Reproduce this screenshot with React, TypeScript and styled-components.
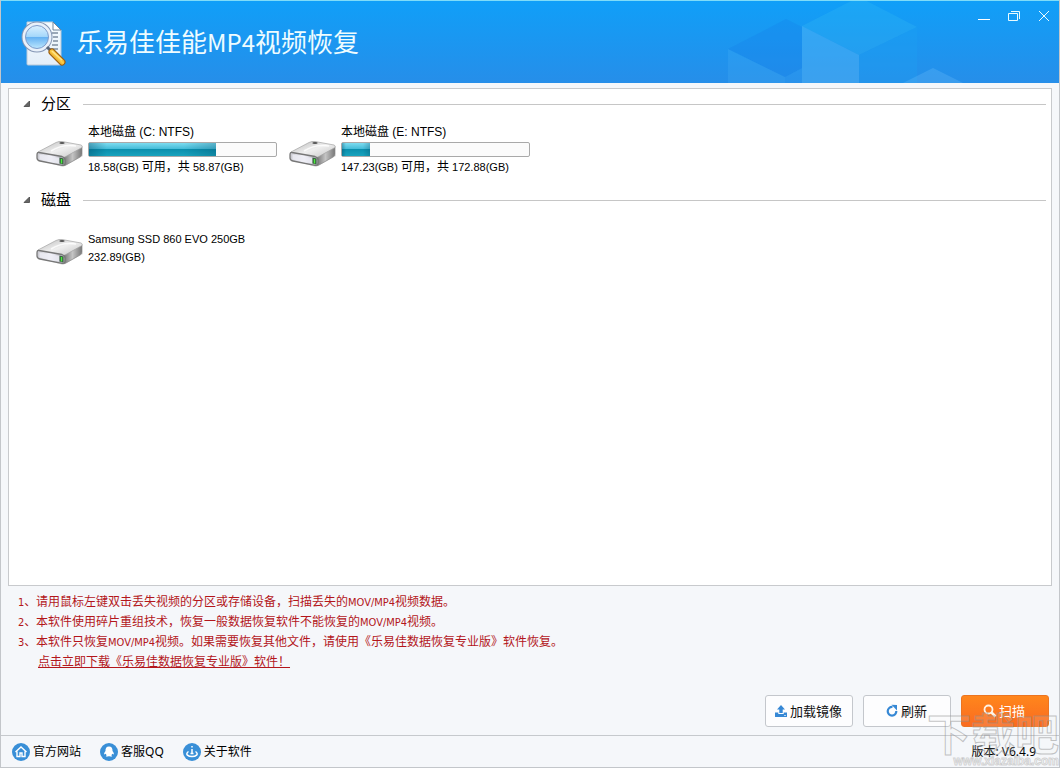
import React, { useState } from 'react';
import styled, { createGlobalStyle } from 'styled-components';

const cjk = '"Noto Sans CJK SC", sans-serif';

const GlobalStyle = createGlobalStyle`
  *, *::before, *::after { box-sizing: border-box; }
  body {
    margin: 0;
    background: #f5f7fa;
    color: #000;
    font: 12px/18px "Liberation Sans", ${cjk};
  }
  button { font: inherit; color: inherit; padding: 0; border: 0; background: none; cursor: pointer; }
`;

const Window = styled.div`
  position: relative;
  display: flex;
  flex-direction: column;
  min-height: 100vh;
  border: 1px solid #c3c6ca;
  border-top: 0;
  background: #f5f7fa;
  overflow: hidden;
`;

const Header = styled.header`
  position: relative;
  display: flex;
  align-items: center;
  justify-content: space-between;
  height: 83px;
  padding-left: 18px;
  border-top: 1px solid #7fdcf8;
  background: linear-gradient(#109ff8, #268ee9);
`;

const HeaderArt = styled.svg`
  position: absolute;
  right: 0;
  bottom: 0;
`;

const Brand = styled.div`
  display: flex;
  align-items: center;
  gap: 8px;
`;

const Title = styled.h1`
  margin: 0;
  padding-bottom: 2px;
  color: #eefcff;
  font: 400 26px/36px ${cjk};
`;

const TitleLatin = styled.span`
  font-size: 24px;
`;

const WindowControls = styled.div`
  position: relative;
  align-self: flex-start;
  display: flex;
  padding-top: 4px;
`;

const WindowButton = styled.button`
  display: flex;
  align-items: center;
  justify-content: center;
  width: 30px;
  height: 22px;
`;

const Panel = styled.main`
  flex: 1;
  margin: 5px 7px 0;
  padding: 5px 5px 0 12px;
  border: 1px solid #c8cacd;
  background: #fff;
`;

const Group = styled.section`
  height: 96px;
`;

const GroupHeader = styled.h2`
  display: flex;
  align-items: center;
  gap: 12px;
  margin: 0;
  height: 20px;
  font: 400 15px/20px ${cjk};
  &::after {
    content: '';
    flex: 1;
    height: 1px;
    background: #c6c6c6;
  }
`;

const GroupToggle = styled.button`
  display: flex;
  align-items: center;
  gap: 11px;
  padding: 0 0 2px 2px;
`;

const DriveGrid = styled.div<{ $offset: number }>`
  display: flex;
  flex-wrap: wrap;
  gap: 12px;
  padding: ${(p) => p.$offset}px 0 0 15px;
`;

const Drive = styled.article`
  display: flex;
  align-items: center;
  gap: 4px;
  width: 241px;
  min-height: 53px;
`;

const DriveImage = styled.svg`
  align-self: flex-start;
  margin-top: 15px;
`;

const DriveText = styled.div<{ $small?: boolean }>`
  flex: 1;
  font-size: ${(p) => (p.$small ? 11 : 12)}px;
  line-height: 18px;
`;

const Line = styled.div`
  white-space: nowrap;
`;

const Size = styled.span`
  font-size: 11px;
`;

const Meter = styled.div`
  height: 15px;
  margin: 1px 0;
  border: 1px solid #a9a9a9;
  border-radius: 2px;
  background: #fbfbfb;
`;

const MeterFill = styled.div`
  height: 100%;
  background: linear-gradient(90deg, rgba(0, 60, 90, 0.35), transparent 14%, transparent 75%, rgba(0, 60, 90, 0.25)),
    linear-gradient(#7ddcf0, #45bcd8 45%, #0b8fad 50%, #18a3bd);
`;

const Notes = styled.section`
  padding: 5px 17px 0;
  color: #b3161b;
  font: 12px/20px ${cjk};
`;

const NoteList = styled.ol`
  margin: 0;
  padding: 0;
  list-style: none;
`;

const NoteItem = styled.li`
  display: flex;
`;

const NoteNumber = styled.span`
  width: 18px;
  white-space: nowrap;
`;

const Format = styled.span`
  font: 11px/1px "DejaVu Sans Condensed", "DejaVu Sans", sans-serif;
`;

const DownloadLink = styled.a`
  display: block;
  width: fit-content;
  margin-left: 20px;
  color: inherit;
`;

const Actions = styled.div`
  display: flex;
  justify-content: flex-end;
  gap: 10px;
  padding: 24px 10px 8px;
`;

const ActionButton = styled.button<{ $primary?: boolean }>`
  display: flex;
  align-items: center;
  justify-content: center;
  gap: 2px;
  width: 88px;
  height: 32px;
  padding-right: 2px;
  border: 1px solid ${(p) => (p.$primary ? '#ec7420' : '#c4c7cc')};
  border-radius: 3px;
  background: ${(p) => (p.$primary ? 'linear-gradient(#ff861c, #fa6b20)' : '#fdfdfe')};
  color: ${(p) => (p.$primary ? '#fff' : '#111')};
  font: 13px/20px ${cjk};
`;

const Footer = styled.footer`
  display: flex;
  align-items: center;
  justify-content: space-between;
  height: 32px;
  padding: 0 23px 0 11px;
  border-top: 1px solid #c6c9cd;
  font: 12px/18px "Noto Sans", ${cjk};
`;

const FooterNav = styled.nav`
  display: flex;
  gap: 19px;
`;

const FooterLink = styled.a`
  display: flex;
  align-items: center;
  gap: 3px;
  color: #000;
  text-decoration: none;
`;

const Watermark = styled.div`
  position: absolute;
  right: 0;
  bottom: 0;
  display: flex;
  flex-direction: column;
  align-items: flex-end;
  pointer-events: none;
`;

const WatermarkName = styled.span`
  color: rgba(240, 240, 240, 0.15);
  -webkit-text-stroke: 1px rgba(140, 140, 140, 0.5);
  font: 700 44px/46px ${cjk};
`;

const WatermarkUrl = styled.span`
  color: rgba(255, 255, 255, 0.75);
  -webkit-text-stroke: 1px rgba(150, 150, 150, 0.4);
  font: 700 12px/12px "Liberation Sans", sans-serif;
`;

const Logo = () => (
  <svg width="50" height="50" viewBox="0 0 50 50" aria-hidden="true">
    <defs>
      <linearGradient id="paper" x2="0" y2="1">
        <stop stopColor="#f6fcff" /><stop offset="1" stopColor="#e4eef8" />
      </linearGradient>
      <linearGradient id="lens" x2="0" y2="1">
        <stop stopColor="#e3f4ff" /><stop offset=".48" stopColor="#a5d8fb" />
        <stop offset=".5" stopColor="#62b0f2" /><stop offset="1" stopColor="#c8eeff" />
      </linearGradient>
      <linearGradient id="handle" x1="0" y1="1" x2="1" y2="0">
        <stop stopColor="#b86b08" /><stop offset=".5" stopColor="#ffce45" /><stop offset="1" stopColor="#c27a13" />
      </linearGradient>
    </defs>
    <path d="M8 5h26l8 8v34q0 1-1 1H9q-1 0-1-1z" fill="url(#paper)" stroke="#b9c9d8" />
    <path d="M34 5v8h8z" fill="#fff" stroke="#71869b" />
    <path d="M33 16h6M34 20h5M34 24h5M33 28h6M31 32h8" stroke="#7d8da0" strokeWidth="1.4" />
    <circle cx="18" cy="20" r="13" fill="none" stroke="#8496b4" strokeWidth="5" />
    <circle cx="18" cy="20" r="13" fill="url(#lens)" stroke="#e9f1fa" strokeWidth="3" />
    <circle cx="18" cy="20" r="11.500" fill="none" stroke="#7f9ccb" />
    <path d="M28 30l3 3" stroke="#596779" strokeWidth="3" />
    <path d="M33 35l10 10" stroke="#9a5c0c" strokeWidth="7" strokeLinecap="round" />
    <path d="M33 35l10 10" stroke="url(#handle)" strokeWidth="5" strokeLinecap="round" />
    <path d="M33 34l10 9" stroke="#ffe58b" strokeWidth="1.5" />
  </svg>
);

const DriveIcon = () => (
  <DriveImage width="48" height="30" viewBox="0 0 48 30" aria-hidden="true">
    <defs>
      <linearGradient id="driveTop" x2="1" y2="1">
        <stop stopColor="#b8b8b8" /><stop offset=".5" stopColor="#efefef" /><stop offset="1" stopColor="#c4c4c4" />
      </linearGradient>
      <linearGradient id="driveSide" x2="1">
        <stop stopColor="#6f6f6f" /><stop offset=".5" stopColor="#c4c4c4" /><stop offset="1" stopColor="#777" />
      </linearGradient>
      <linearGradient id="driveFront" x2="1">
        <stop stopColor="#c9c9d0" /><stop offset=".5" stopColor="#f5f5fc" /><stop offset="1" stopColor="#a7a7b0" />
      </linearGradient>
    </defs>
    <path d="M3 22l24 7 20-11-2-4z" fill="#000" opacity=".14" />
    <path d="M27 19L46 9v7q0 2-2 3L30 27q-2 1-3 0z" fill="url(#driveSide)" stroke="#8a8a8a" strokeWidth=".7" />
    <path d="M2 14L20 4.500q3-1.500 6-1L45 7q2 .7 1 2.500L29 19q-2 1-5 .5L3 16q-2-.5-1-2z" fill="url(#driveTop)" stroke="#a3a3a3" strokeWidth=".7" />
    <path d="M15 13Q26 6 40 8" fill="none" stroke="#fff" strokeWidth="1.500" opacity=".8" />
    <ellipse cx="26" cy="5" rx="2.700" ry="1.100" fill="#555" />
    <path d="M3 14.500l23 4q3 1 3 3.500v3q0 3-3 2.300L4 23q-3-.6-3-3v-3q0-3 2-2.500z" fill="url(#driveFront)" stroke="#777" strokeWidth="1.300" />
    <path d="M3.500 16.500L23 20v5.500L3.500 21.500z" fill="#ececf4" opacity=".8" />
    <path d="M23.500 19.500l4 1v6l-4-1z" fill="#37603d" />
    <path d="M25.500 21v4.500" stroke="#48ed3d" strokeWidth="1.400" />
  </DriveImage>
);

const HeaderCubes = () => (
  <HeaderArt width="339" height="82" viewBox="720 1 339 82" aria-hidden="true">
    <path d="M728 49l58-30 16 8v41l-17 9z" fill="#167fe8" opacity=".28" />
    <path d="M728 49l57 28v6h-57z" fill="#5abdf7" opacity=".18" />
    <path d="M785 77l17-9v15h-17z" fill="#3ba3f4" opacity=".2" />
    <path d="M802 26l57-29 58 30-58 28z" fill="#38bcf2" opacity=".26" />
    <path d="M802 26l57 29v28h-57z" fill="#5dbcf8" opacity=".4" />
    <path d="M859 55l58-28v56h-58z" fill="#1fa1f3" opacity=".3" />
    <path d="M903 83l30-15 30 15z" fill="#6abef7" opacity=".3" />
  </HeaderArt>
);

const UploadIcon = () => (
  <svg width="14" height="14" viewBox="0 0 14 14" aria-hidden="true">
    <path d="M7 1l4 4.500H8.700v3.500H5.300V5.500H3z" fill="#3688d5" />
    <path d="M1 8.500h3.300V10h5.400V8.500H13v4q0 .5-.5.500h-11q-.5 0-.5-.5z" fill="#3688d5" />
    <path d="M10 11.500h2" stroke="#d5e8f8" strokeWidth=".8" />
  </svg>
);

const RefreshIcon = () => (
  <svg width="14" height="14" viewBox="0 0 14 14" aria-hidden="true">
    <path d="M7.500 3A4.300 4.300 0 1 0 11.300 7" fill="none" stroke="#3688d5" strokeWidth="2.200" />
    <path d="M6.500 .8L12 1v5.500z" fill="#3688d5" />
  </svg>
);

const SearchIcon = () => (
  <svg width="14" height="14" viewBox="0 0 14 14" fill="none" stroke="#fff3e5" aria-hidden="true">
    <circle cx="5.500" cy="5.500" r="4" strokeWidth="1.800" />
    <path d="M8.500 8.500l4 4" strokeWidth="2.500" />
  </svg>
);

const RoundIcon = ({ kind }: { kind: 'home' | 'qq' | 'about' }) => (
  <svg width="18" height="18" viewBox="0 0 18 18" aria-hidden="true">
    <circle cx="9" cy="9" r="9" fill="#398fd7" />
    {kind === 'home' && (
      <path d="M3.500 9L9 4l5.500 5M5 8.500v5h3V10h2v3.500h3v-5" fill="none" stroke="#fff" strokeWidth="1.400" />
    )}
    {kind === 'qq' && (
      <path d="M9 3.500c-2.700 0-3.700 2-3.500 4.500-1.500 2-1.500 3-1.200 3.500l1.400-.7.900 1.500-.9 1.200h2.500L9 13l.8.500h2.500l-.9-1.200.9-1.500 1.400.7c.3-.5.300-1.500-1.200-3.500.2-2.500-.8-4.500-3.500-4.500z" fill="#fff" />
    )}
    {kind === 'about' && (
      <g fill="none" stroke="#fff" strokeWidth="1.500">
        <path d="M9 3v1.500M9 6v5M7.500 10.500h3" />
        <path d="M5.500 8.500c-4 3 0 5 3.500 5s7.500-2 3.500-5" />
      </g>
    )}
  </svg>
);

function GroupBox({ title, offset, children }: { title: string; offset: number; children: React.ReactNode }) {
  const [open, setOpen] = useState(true);
  return (
    <Group>
      <GroupHeader>
        <GroupToggle type="button" aria-expanded={open} onClick={() => setOpen(!open)}>
          <svg width="7" height="7" viewBox="0 0 7 7" aria-hidden="true">
            <path d="M6.500 1v5.500H1z" fill="#666" stroke="#444" strokeWidth=".8" />
          </svg>
          {title}
        </GroupToggle>
      </GroupHeader>
      {open && <DriveGrid $offset={offset}>{children}</DriveGrid>}
    </Group>
  );
}

const partitions = [
  { name: '本地磁盘 (C: NTFS)', free: '18.58(GB)', total: '58.87(GB)', used: 68 },
  { name: '本地磁盘 (E: NTFS)', free: '147.23(GB)', total: '172.88(GB)', used: 15 },
];

export default function App() {
  return (
    <>
      <GlobalStyle />
      <Window>
        <Header>
          <HeaderCubes />
          <Brand>
            <Logo />
            <Title>乐易佳佳能<TitleLatin>MP4</TitleLatin>视频恢复</Title>
          </Brand>
          <WindowControls>
            <WindowButton type="button" aria-label="最小化">
              <svg width="12" height="12" viewBox="0 0 12 12"><path d="M0 9.500h12" stroke="#fff" /></svg>
            </WindowButton>
            <WindowButton type="button" aria-label="还原">
              <svg width="12" height="12" viewBox="0 0 12 12" fill="none" stroke="#e8fbff">
                <path d="M.5 3.500h9v7h-9zM3 1.500h8.500V9" />
              </svg>
            </WindowButton>
            <WindowButton type="button" aria-label="关闭">
              <svg width="12" height="12" viewBox="0 0 12 12" stroke="#e8fbff"><path d="M1 1l10 10M11 1L1 11" /></svg>
            </WindowButton>
          </WindowControls>
        </Header>

        <Panel>
          <GroupBox title="分区" offset={9}>
            {partitions.map((p) => (
              <Drive key={p.name}>
                <DriveIcon />
                <DriveText>
                  <Line>{p.name}</Line>
                  <Meter role="meter" aria-label={p.name} aria-valuemin={0} aria-valuemax={100} aria-valuenow={p.used}>
                    <MeterFill style={{ width: `${p.used}%` }} />
                  </Meter>
                  <Line>
                    <Size>{p.free} </Size>可用，共<Size> {p.total}</Size>
                  </Line>
                </DriveText>
              </Drive>
            ))}
          </GroupBox>
          <GroupBox title="磁盘" offset={11}>
            <Drive>
              <DriveIcon />
              <DriveText $small>
                <Line>Samsung SSD 860 EVO 250GB</Line>
                <Line>232.89(GB)</Line>
              </DriveText>
            </Drive>
          </GroupBox>
        </Panel>

        <Notes>
          <NoteList>
            <NoteItem>
              <NoteNumber><Format>1</Format>、</NoteNumber>
              <span>请用鼠标左键双击丢失视频的分区或存储设备，扫描丢失的<Format>MOV/MP4</Format>视频数据。</span>
            </NoteItem>
            <NoteItem>
              <NoteNumber><Format>2</Format>、</NoteNumber>
              <span>本软件使用碎片重组技术，恢复一般数据恢复软件不能恢复的<Format>MOV/MP4</Format>视频。</span>
            </NoteItem>
            <NoteItem>
              <NoteNumber><Format>3</Format>、</NoteNumber>
              <span>本软件只恢复<Format>MOV/MP4</Format>视频。如果需要恢复其他文件，请使用《乐易佳数据恢复专业版》软件恢复。</span>
            </NoteItem>
          </NoteList>
          <DownloadLink href="#download">点击立即下载《乐易佳数据恢复专业版》软件！</DownloadLink>
        </Notes>

        <Actions>
          <ActionButton type="button"><UploadIcon />加载镜像</ActionButton>
          <ActionButton type="button"><RefreshIcon />刷新</ActionButton>
          <ActionButton type="button" $primary><SearchIcon />扫描</ActionButton>
        </Actions>

        <Footer>
          <FooterNav>
            <FooterLink href="#website"><RoundIcon kind="home" />官方网站</FooterLink>
            <FooterLink href="#support"><RoundIcon kind="qq" />客服QQ</FooterLink>
            <FooterLink href="#about"><RoundIcon kind="about" />关于软件</FooterLink>
          </FooterNav>
          <span>版本: V6.4.9</span>
        </Footer>

        <Watermark aria-hidden="true">
          <WatermarkName>下载吧</WatermarkName>
          <WatermarkUrl>www.xiazaiba.com</WatermarkUrl>
        </Watermark>
      </Window>
    </>
  );
}
